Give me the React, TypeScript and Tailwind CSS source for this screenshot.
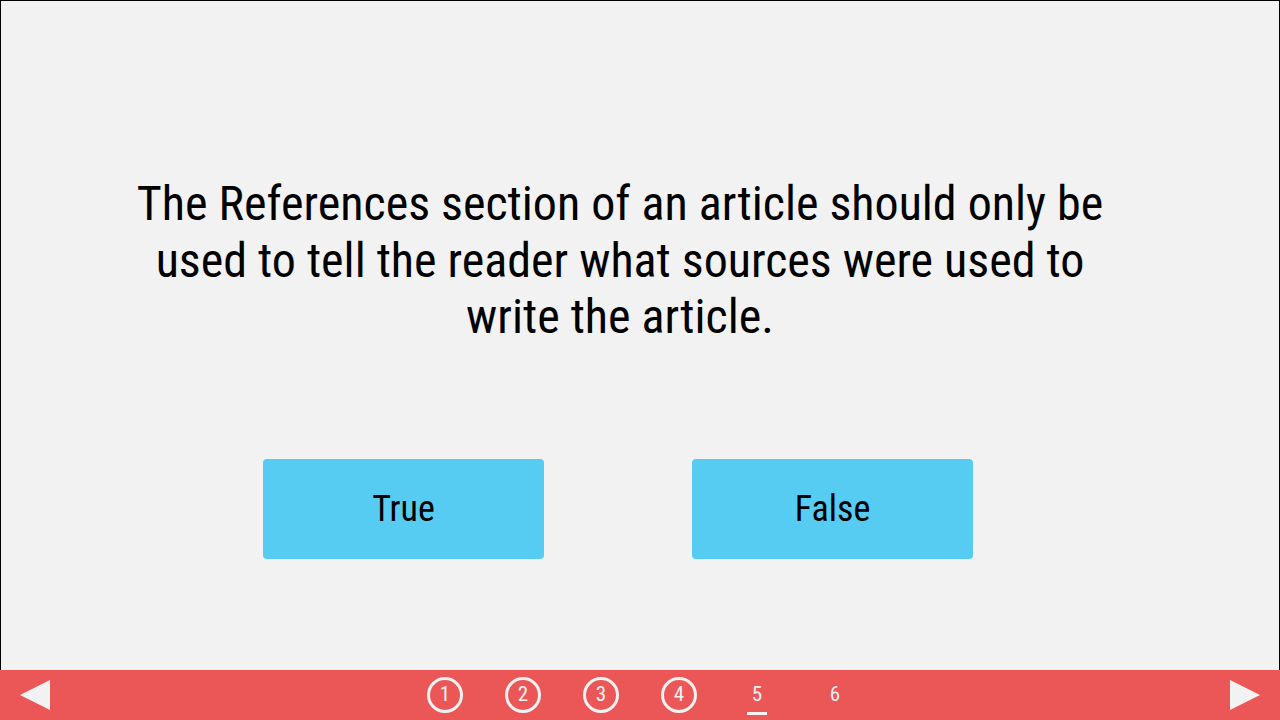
export default function App() {
  const steps = ['1', '2', '3', '4', '5', '6']
  const current = 5

  return (
    <div
      className="w-[1280px] h-[720px] flex flex-col bg-[#f2f2f2]"
      style={{ fontFamily: '"Roboto Condensed", Roboto, "Liberation Sans", sans-serif' }}
    >
      <main className="flex-1 border border-b-0 border-black flex flex-col items-center pr-[40px]">
        <h1 className="mt-[175px] w-[1000px] text-center text-[48px] leading-[56.5px] text-black font-stretch-condensed">
          The References section of an article should only be used to tell the reader what sources were used to write the article.
        </h1>
        <div className="mt-[113px] mr-[4px] flex gap-[148px]">
          <button className="w-[281px] h-[100px] rounded-[4px] bg-[#56ccf2] text-[36px] text-black font-stretch-condensed">
            True
          </button>
          <button className="w-[281px] h-[100px] rounded-[4px] bg-[#56ccf2] text-[36px] text-black font-stretch-condensed">
            False
          </button>
        </div>
      </main>
      <footer className="h-[50px] bg-[#eb5757] flex items-center justify-between px-[20px]">
        <svg width="30" height="30" viewBox="0 0 30 30">
          <polygon points="0,15 30,0 30,30" fill="#f2f2f2" />
        </svg>
        <nav className="flex items-center gap-[42px]">
          {steps.map((s, i) => {
            const n = i + 1
            if (n < current) {
              return (
                <span
                  key={s}
                  className="w-[36px] h-[36px] rounded-full border-[3px] border-[#f2f2f2] flex items-center justify-center text-[21px] text-[#f2f2f2] font-stretch-condensed"
                >
                  {s}
                </span>
              )
            }
            return (
              <span key={s} className="relative w-[36px] h-[36px] flex items-center justify-center text-[21px] text-[#f2f2f2] font-stretch-condensed">
                {s}
                {n === current && (
                  <span className="absolute left-[8px] bottom-[-2px] w-[20px] h-[3px] bg-[#f2f2f2]" />
                )}
              </span>
            )
          })}
        </nav>
        <svg width="30" height="30" viewBox="0 0 30 30">
          <polygon points="30,15 0,0 0,30" fill="#f2f2f2" />
        </svg>
      </footer>
    </div>
  )
}
